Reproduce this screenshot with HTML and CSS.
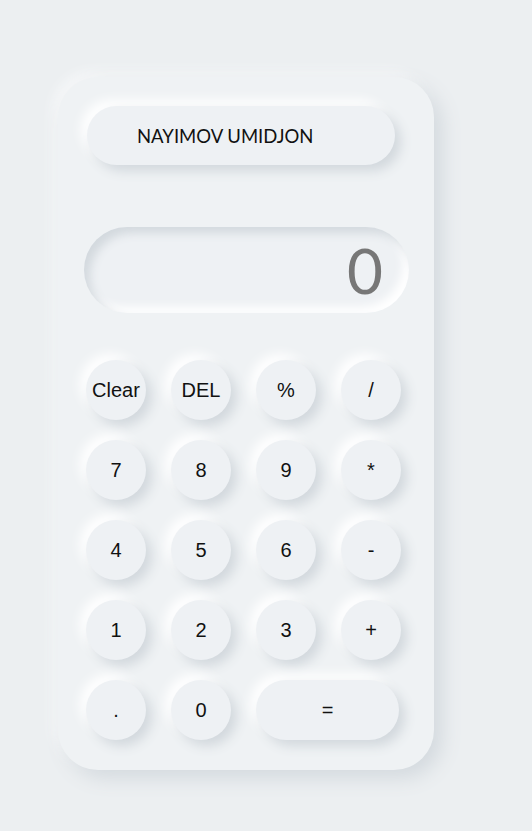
FILE: index.html
```html
<!DOCTYPE html>
<html>
<head>
<meta charset="utf-8">
<link rel="stylesheet" href="styles.css">
</head>
<body>
<div class="calc">
  <div class="name">NAYIMOV UMIDJON</div>
  <div class="display">0</div>
  <div class="keys">
    <div class="key">Clear</div>
    <div class="key">DEL</div>
    <div class="key">%</div>
    <div class="key">/</div>
    <div class="key">7</div>
    <div class="key">8</div>
    <div class="key">9</div>
    <div class="key">*</div>
    <div class="key">4</div>
    <div class="key">5</div>
    <div class="key">6</div>
    <div class="key">-</div>
    <div class="key">1</div>
    <div class="key">2</div>
    <div class="key">3</div>
    <div class="key">+</div>
    <div class="key">.</div>
    <div class="key">0</div>
    <div class="key wide">=</div>
  </div>
</div>
</body>
</html>
```
FILE: styles.css
```css
html, body {
  margin: 0;
  background: #eceff1;
}
body {
  padding: 77px 0 0 58px;
  height: 831px;
  box-sizing: border-box;
}
.calc {
  width: 376px;
  height: 693px;
  box-sizing: border-box;
  background: #eff2f4;
  border-radius: 40px;
  padding: 29px 25px 0 26px;
  box-shadow: 8px 8px 20px #d3d9de, -5px -5px 12px #f8f9fa;
}
.name {
  margin-left: 3px;
  width: 308px;
  height: 59px;
  box-sizing: border-box;
  border-radius: 30px;
  background: #eef1f4;
  box-shadow: 6px 6px 12px #d2d8dd, -6px -6px 12px #ffffff;
  font-family: "Lato", "Open Sans", sans-serif;
  font-size: 18.5px;
  color: #111;
  padding-left: 50px;
  display: flex;
  align-items: center;
}
.display {
  margin-top: 62px;
  height: 86px;
  border-radius: 43px;
  background: #eef1f4;
  box-shadow: inset 6px 6px 10px #d3d9de, inset -6px -6px 10px #ffffff;
  font-family: "Lato", "Open Sans", sans-serif;
  font-size: 62px;
  color: #777;
  display: flex;
  align-items: center;
  justify-content: flex-end;
  padding-right: 26px;
  box-sizing: border-box;
}
.keys {
  margin-top: 47px;
  margin-left: 2px;
  display: grid;
  grid-template-columns: repeat(4, 60px);
  grid-auto-rows: 60px;
  column-gap: 25px;
  row-gap: 20px;
}
.key {
  border-radius: 30px;
  background: #eef1f4;
  box-shadow: 6px 6px 12px #d2d8dd, -6px -6px 12px #ffffff;
  display: flex;
  align-items: center;
  justify-content: center;
  font-family: "Liberation Sans", Arial, sans-serif;
  font-size: 20px;
  color: #111;
}
.key.wide {
  grid-column: span 2;
  margin-right: 2px;
}
```
